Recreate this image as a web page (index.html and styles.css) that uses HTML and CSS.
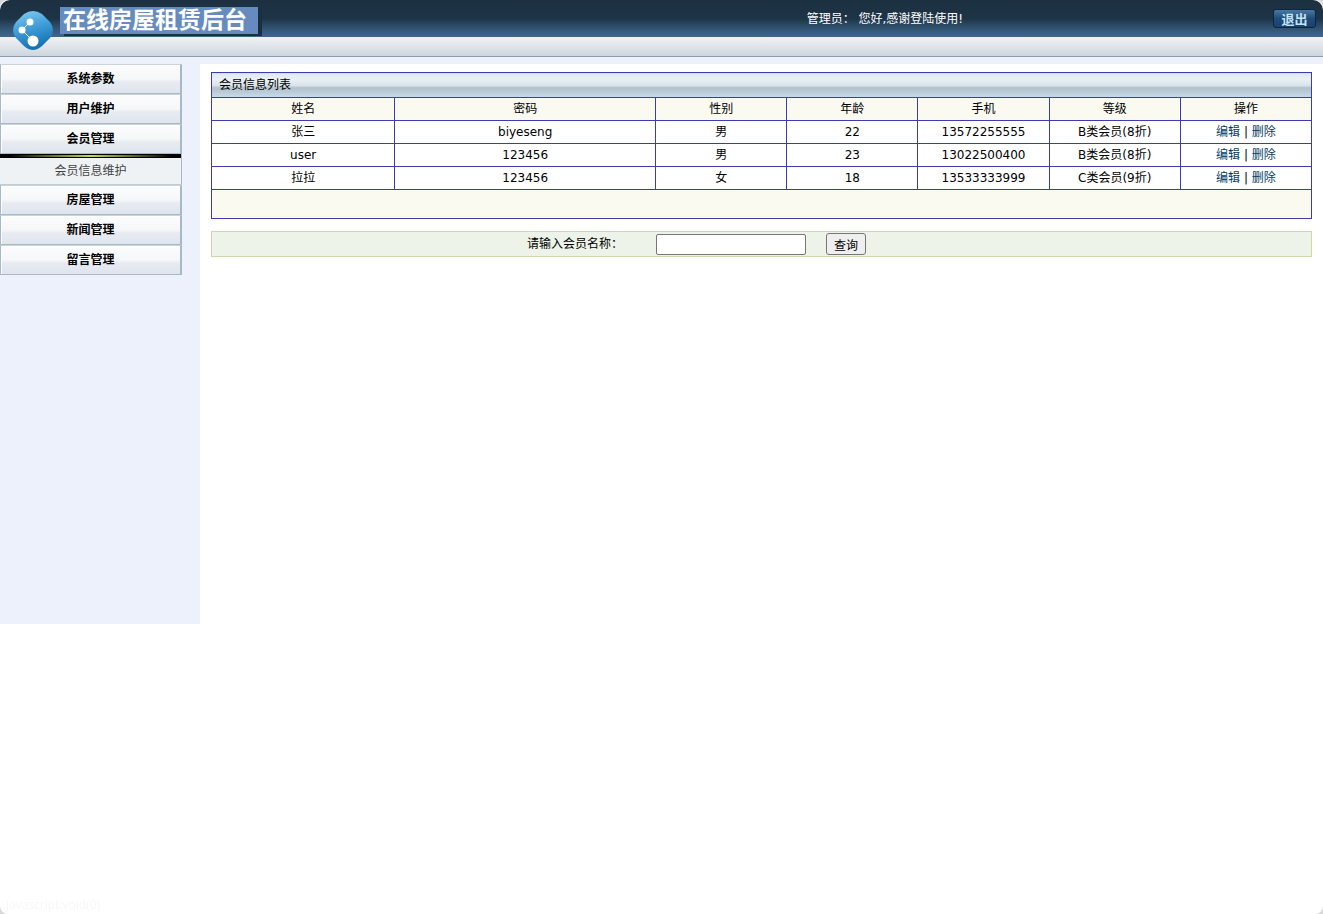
FILE: index.html
```html
<!DOCTYPE html>
<html lang="zh-CN">
<head>
  <meta charset="UTF-8" />
  <meta name="viewport" content="width=device-width, initial-scale=1" />
  <title>在线房屋租赁后台</title>
  <link rel="stylesheet" href="styles.css">
</head>
<body>
  <header class="header">
    <div class="topbar">
      <svg class="logo" viewBox="0 0 42 44" aria-hidden="true">
        <defs>
          <linearGradient id="logoFill" x1="0" y1="0" x2="0.3" y2="1">
            <stop offset="0" stop-color="#8fd0f2" />
            <stop offset="0.45" stop-color="#46a3dc" />
            <stop offset="1" stop-color="#1673b5" />
          </linearGradient>
        </defs>
        <path d="M12 4Q21 -2 30 4L38 12Q44 20 38 28L30 36Q21 44 12 36L4 28Q-2 20 4 12Z" fill="url(#logoFill)" />
        <path d="M18 12L10 20L21 31" fill="none" stroke="#fff" stroke-width="1" />
        <circle cx="18" cy="12" r="3.5" fill="#fff" />
        <circle cx="10" cy="20" r="3.5" fill="#fff" />
        <circle cx="21" cy="31" r="5.5" fill="#fff" />
      </svg>
      <div class="brand"><h1 class="title">在线房屋租赁后台</h1></div>
      <div class="welcome">管理员： 您好,感谢登陆使用!</div>
      <button class="logout" type="button">退出</button>
    </div>
    <div class="subbar"></div>
  </header>

  <div class="page">
    <nav class="sidebar">
      <ul class="menu">
        <li><a class="menu-item" href="#">系统参数</a></li>
        <li><a class="menu-item" href="#">用户维护</a></li>
        <li>
          <a class="menu-item" href="#">会员管理</a>
          <a class="menu-sub" href="#">会员信息维护</a>
        </li>
        <li><a class="menu-item" href="#">房屋管理</a></li>
        <li><a class="menu-item" href="#">新闻管理</a></li>
        <li><a class="menu-item" href="#">留言管理</a></li>
      </ul>
    </nav>

    <main class="content">
      <table class="list">
        <colgroup>
          <col class="col-name"><col class="col-pwd"><col><col><col><col><col>
        </colgroup>
        <thead>
          <tr class="list-title"><th colspan="7">会员信息列表</th></tr>
          <tr class="list-head">
            <th>姓名</th><th>密码</th><th>性别</th><th>年龄</th><th>手机</th><th>等级</th><th>操作</th>
          </tr>
        </thead>
        <tbody>
          <tr>
            <td>张三</td><td>biyeseng</td><td>男</td><td>22</td><td>13572255555</td><td>B类会员(8折)</td>
            <td><a href="#">编辑</a> | <a href="#">删除</a></td>
          </tr>
          <tr>
            <td>user</td><td>123456</td><td>男</td><td>23</td><td>13022500400</td><td>B类会员(8折)</td>
            <td><a href="#">编辑</a> | <a href="#">删除</a></td>
          </tr>
          <tr>
            <td>拉拉</td><td>123456</td><td>女</td><td>18</td><td>13533333999</td><td>C类会员(9折)</td>
            <td><a href="#">编辑</a> | <a href="#">删除</a></td>
          </tr>
        </tbody>
        <tfoot>
          <tr class="list-foot"><td colspan="7"></td></tr>
        </tfoot>
      </table>

      <form class="search">
        <label for="memberName">请输入会员名称：</label>
        <input class="search-input" id="memberName" type="text">
        <button class="search-button" type="button">查询</button>
      </form>
    </main>
  </div>

  <div class="status">javascript:void(0)</div>
</body>
</html>
```
FILE: styles.css
```css
*,
*::before {
  box-sizing: border-box;
}

html {
  background: #d8d8d8;
}

body {
  margin: 0;
  min-height: 100vh;
  background: #fff;
  border-radius: 8px;
  color: #000;
  font-family: "DejaVu Sans", "Noto Sans CJK SC", sans-serif;
  font-size: 12px;
  line-height: 18px;
}

a {
  color: #034066;
  text-decoration: none;
}

/* header */
.topbar {
  position: relative;
  display: grid;
  grid-template-columns: 61.3% 1fr auto;
  align-items: center;
  height: 37px;
  padding-right: 7px;
  border-radius: 10px 10px 0 0;
  background: linear-gradient(#1c3040, #1d3447 50%, #30526f 75%, #40688f);
}

.logo {
  position: absolute;
  left: 12px;
  top: 10px;
  width: 42px;
  height: 44px;
}

.brand {
  padding-left: 60px;
}

.title {
  width: 198px;
  height: 27px;
  margin: 4px 0 0;
  padding-left: 3px;
  background: #668bbe;
  box-shadow: 4px 2px 0 #1b2f40;
  color: #fff;
  font-family: "Noto Sans CJK SC", sans-serif;
  font-size: 23px;
  font-weight: bold;
  line-height: 22px;
  white-space: nowrap;
}

.welcome {
  color: #fff;
}

.logout {
  width: 43px;
  height: 19px;
  padding: 0;
  border: 1px solid #0a2644;
  border-radius: 3px;
  background: linear-gradient(#4a789f, #1f4d7b 50%, #1a426c);
  color: #c3e1f7;
  font-family: "Noto Sans CJK SC", sans-serif;
  font-size: 13px;
  font-weight: bold;
  line-height: 16px;
}

.subbar {
  height: 27px;
  border-bottom: 7px solid #edf1fb;
  background: linear-gradient(#f0f2f4, #dfe4e9 50%, #cdd6df 93%, #8e9cae 95%) padding-box;
}

/* left menu */
.page {
  display: flex;
  align-items: flex-start;
}

.sidebar {
  flex: 0 0 200px;
  min-height: 560px;
  background: #edf1fb;
}

.menu {
  width: 182px;
  margin: 0;
  padding: 0;
  list-style: none;
}

.menu-item {
  display: block;
  height: 30px;
  border: solid #a9b8c6;
  border-width: 1px 2px 1px 1px;
  border-top-color: #c9d3dc;
  background: linear-gradient(#fcfcfd, #f5f7f9 50%, #e8ebf1 60%, #dfe4ed);
  box-shadow: inset 1px 1px 0 #fff;
  color: #000;
  font-weight: bold;
  line-height: 28px;
  text-align: center;
}

.menu-sub {
  display: block;
  border-right: 1px solid #a9b8c6;
  border-bottom: 1px solid #c3ccd5;
  background: #eef2f4;
  color: #444;
  line-height: 26px;
  text-align: center;
}

.menu-sub::before {
  content: "";
  display: block;
  height: 4px;
  border: solid #000;
  border-width: 1px 0;
  background: linear-gradient(90deg, #000 5%, #c1dc57 50%, #000 95%);
}

/* member list */
.content {
  flex: 1;
  min-width: 0;
  padding: 8px 11px;
}

.list {
  width: 100%;
  table-layout: fixed;
  border-collapse: collapse;
}

.col-name {
  width: 16.67%;
}

.col-pwd {
  width: 23.7%;
}

.list th,
.list td {
  height: 23px;
  padding: 0;
  border: 1px solid #3c3cae;
  font-weight: normal;
  line-height: 18px;
  text-align: center;
}

.list .list-title th {
  height: 25px;
  padding-left: 7px;
  background: linear-gradient(#dfe8fb, #eaf0f5 25%, #d8e1e8 54%, #b1c1cc 57%, #bccdd8 80%, #c8dbf5);
  text-align: left;
}

.list-head th,
.list-foot td {
  background: #fafaf1;
}

.list .list-foot td {
  height: 29px;
}

/* search bar */
.search {
  display: flex;
  align-items: center;
  height: 26px;
  margin-top: 12px;
  padding-left: 28.6%;
  border: 1px solid #cbd8ac;
  background: #edf3e9;
}

.search-input {
  width: 150px;
  height: 21px;
  margin: 0 20px 0 33px;
  border: 1px solid #767676;
  border-radius: 2px;
  background: #fff;
}

.search-button {
  width: 40px;
  height: 22px;
  padding: 0;
  border: 1px solid #767676;
  border-radius: 3px;
  background: #efefef;
  color: #000;
  font-family: inherit;
  font-size: 12px;
}

/* status text in the window corner */
.status {
  position: fixed;
  left: 0;
  bottom: 0;
  padding: 0 6px;
  color: #f7f7f7;
  font-family: "Open Sans", sans-serif;
}
```
